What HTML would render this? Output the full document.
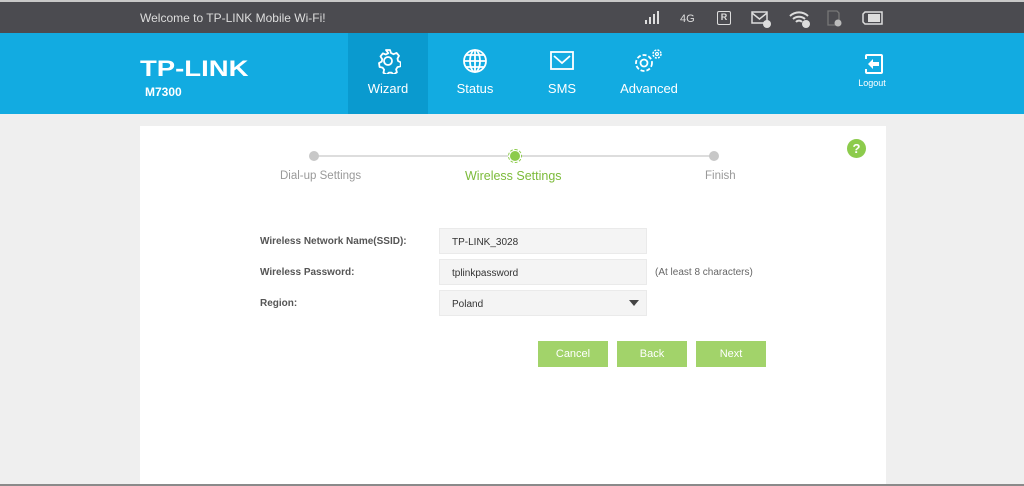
<!DOCTYPE html>
<html><head><meta charset="utf-8"><style>
*{margin:0;padding:0;box-sizing:border-box}
body{width:1024px;height:486px;overflow:hidden;background:#efefef;font-family:"Liberation Sans",sans-serif;position:relative}
.top{position:absolute;left:0;top:0;width:1024px;height:33px;background:#4b4b50;border-top:2px solid #c8c8c8}
.top .w{position:absolute;left:140px;top:9px;color:#ddd;font-size:12px}
.nav{position:absolute;left:0;top:33px;width:1024px;height:81px;background:#12abe1}
.logo{position:absolute;left:140px;top:23px;color:#fff;font-weight:bold;font-size:22px;letter-spacing:0px;transform:scaleX(1.25);transform-origin:left}
.model{position:absolute;left:145px;top:52px;color:#fff;font-weight:bold;font-size:12px}
.item{position:absolute;top:0;height:81px;width:80px;text-align:center;color:#fff;font-size:13px}
.item svg{position:absolute;left:50%;top:15px;transform:translateX(-50%)}
.item span{position:absolute;left:0;right:0;top:48px}
.act{background:#0a9acf}
.panel{position:absolute;left:140px;top:126px;width:746px;height:360px;background:#fff}
.bottom{position:absolute;left:0;top:484px;width:1024px;height:2px;background:#8a8a8a}
.line{position:absolute;top:155px;height:2px;background:#ddd}
.dot{position:absolute;width:10px;height:10px;border-radius:50%;background:#c8c8c8}
.lbl{position:absolute;font-size:11.5px;color:#999}
.fl{position:absolute;left:260px;font-size:10px;font-weight:bold;color:#555}
.inp{position:absolute;left:439px;width:208px;height:26px;background:#f4f4f4;border:1px solid #eaeaea;font-size:10px;color:#333;padding:8px 0 0 12px}
.btn{position:absolute;top:341px;height:26px;width:70px;background:#a2d36a;color:#fff;font-size:11px;text-align:center;line-height:27px}
</style></head><body>
<div class="top"><div class="w">Welcome to TP-LINK Mobile Wi-Fi!</div>
<svg style="position:absolute;left:644px;top:9px" width="16" height="14"><rect x="1" y="9" width="2" height="4" fill="#ddd"/><rect x="5" y="6" width="2" height="7" fill="#ddd"/><rect x="9" y="3" width="2" height="10" fill="#ddd"/><rect x="13" y="0" width="2" height="13" fill="#ddd"/></svg>
<div style="position:absolute;left:680px;top:11px;color:#ddd;font-size:11px">4G</div>
<div style="position:absolute;left:717px;top:9px;width:14px;height:14px;border:1.5px solid #ddd;border-radius:2px;color:#ddd;font-size:9px;font-weight:bold;text-align:center;line-height:11px">R</div>
<svg style="position:absolute;left:751px;top:8px" width="22" height="18"><rect x="1" y="2" width="15" height="11" fill="none" stroke="#ddd" stroke-width="1.5"/><path d="M1 3l7.5 6 7.5-6" fill="none" stroke="#ddd" stroke-width="1.5"/><circle cx="16" cy="14" r="4" fill="#ddd"/></svg>
<svg style="position:absolute;left:788px;top:8px" width="24" height="18"><path d="M2 6a13 13 0 0 1 18 0M5 9a9 9 0 0 1 12 0M8 12a4 4 0 0 1 6 0" fill="none" stroke="#ddd" stroke-width="2"/><circle cx="18" cy="14" r="4" fill="#ddd"/></svg>
<svg style="position:absolute;left:826px;top:8px" width="18" height="18"><path d="M2 1h9l2 2v12h-11z" fill="none" stroke="#777" stroke-width="1.3"/><circle cx="12" cy="13" r="3.5" fill="#bbb"/></svg>
<svg style="position:absolute;left:862px;top:9px" width="22" height="14"><path d="M3 1h17v12h-17l-2-2v-8z" fill="none" stroke="#ddd" stroke-width="1.5"/><rect x="6" y="3" width="12" height="8" fill="#ddd"/></svg>
</div>
<div class="nav">
<div class="logo">TP-LINK</div><div class="model">M7300</div>
<div class="item act" style="left:348px"><svg width="26" height="26" viewBox="0 0 26 26"><path d="M11 2h4l1 3 2.5 1.2 3-1.3 2.5 2.9-1.5 2.8.5 2.4 2.9 1.4-.4 3.9-3 .8-1.4 2.2.8 3-3.2 2.1-2.3-1.8-2.6.1-2.1 2-3.3-1.9.7-3.1-1.5-2.1-3-.6-.6-3.9 2.8-1.5.4-2.5-1.7-2.7 2.3-3 3.1 1.1 2.4-1.3z" fill="none" stroke="#fff" stroke-width="1.8" stroke-linejoin="round"/><circle cx="13" cy="13" r="4" fill="none" stroke="#fff" stroke-width="1.8"/></svg><span>Wizard</span></div>
<div class="item" style="left:435px"><svg width="26" height="26" viewBox="0 0 26 26" fill="none" stroke="#fff" stroke-width="1.8"><circle cx="13" cy="13" r="11"/><ellipse cx="13" cy="13" rx="5" ry="11"/><path d="M2 13h22M4 7h18M4 19h18M13 2v22"/></svg><span>Status</span></div>
<div class="item" style="left:522px"><svg width="26" height="26" viewBox="0 0 26 26" fill="none" stroke="#fff" stroke-width="1.8"><rect x="2" y="4" width="22" height="17"/><path d="M5 8l8 7 8-7"/></svg><span>SMS</span></div>
<div class="item" style="left:609px"><svg width="34" height="28" viewBox="0 0 34 28"><circle cx="12" cy="15" r="8" fill="none" stroke="#fff" stroke-width="1.8" stroke-dasharray="4 2"/><circle cx="12" cy="15" r="3.5" fill="none" stroke="#fff" stroke-width="1.8"/><circle cx="25" cy="6" r="4" fill="none" stroke="#fff" stroke-width="1.5" stroke-dasharray="2 1.2"/><circle cx="25" cy="6" r="1.5" fill="none" stroke="#fff" stroke-width="1.2"/></svg><span>Advanced</span></div>
<svg style="position:absolute;left:862px;top:20px" width="22" height="22" viewBox="0 0 22 22"><path d="M4 6V3a1 1 0 0 1 1-1h14a1 1 0 0 1 1 1v16a1 1 0 0 1-1 1H5a1 1 0 0 1-1-1v-3" fill="none" stroke="#fff" stroke-width="2"/><path d="M6 11l5-5v3h6v4h-6v3z" fill="#fff"/></svg>
<div style="position:absolute;left:850px;top:45px;width:44px;text-align:center;color:#fff;font-size:9px">Logout</div>
</div>
<div class="panel"></div>
<div class="line" style="left:314px;width:400px"></div>
<div class="dot" style="left:309px;top:151px"></div>
<div class="dot" style="left:709px;top:151px"></div>
<div style="position:absolute;left:508px;top:149px;width:14px;height:14px;border-radius:50%;border:1px dashed #8ccb4c;background:#fff"></div>
<div class="dot" style="left:510px;top:151px;background:#8ccb4c"></div>
<div class="lbl" style="left:280px;top:170px">Dial-up Settings</div>
<div class="lbl" style="left:465px;top:169px;color:#7cbb3a;font-size:12.5px">Wireless Settings</div>
<div class="lbl" style="left:705px;top:170px">Finish</div>
<div style="position:absolute;left:847px;top:139px;width:19px;height:19px;border-radius:50%;background:#8ccb4c;color:#fff;font-weight:bold;font-size:13px;text-align:center;line-height:19px">?</div>
<div class="fl" style="top:236px">Wireless Network Name(SSID):</div>
<div class="fl" style="top:267px">Wireless Password:</div>
<div class="fl" style="top:298px">Region:</div>
<div class="inp" style="top:228px">TP-LINK_3028</div>
<div class="inp" style="top:259px">tplinkpassword</div>
<div class="inp" style="top:290px">Poland</div>
<div style="position:absolute;left:629px;top:300px;width:0;height:0;border-left:5px solid transparent;border-right:5px solid transparent;border-top:6px solid #444"></div>
<div style="position:absolute;left:655px;top:267px;font-size:10px;color:#666">(At least 8 characters)</div>
<div class="btn" style="left:538px">Cancel</div>
<div class="btn" style="left:617px">Back</div>
<div class="btn" style="left:696px">Next</div>
<div class="bottom"></div>
</body></html>
